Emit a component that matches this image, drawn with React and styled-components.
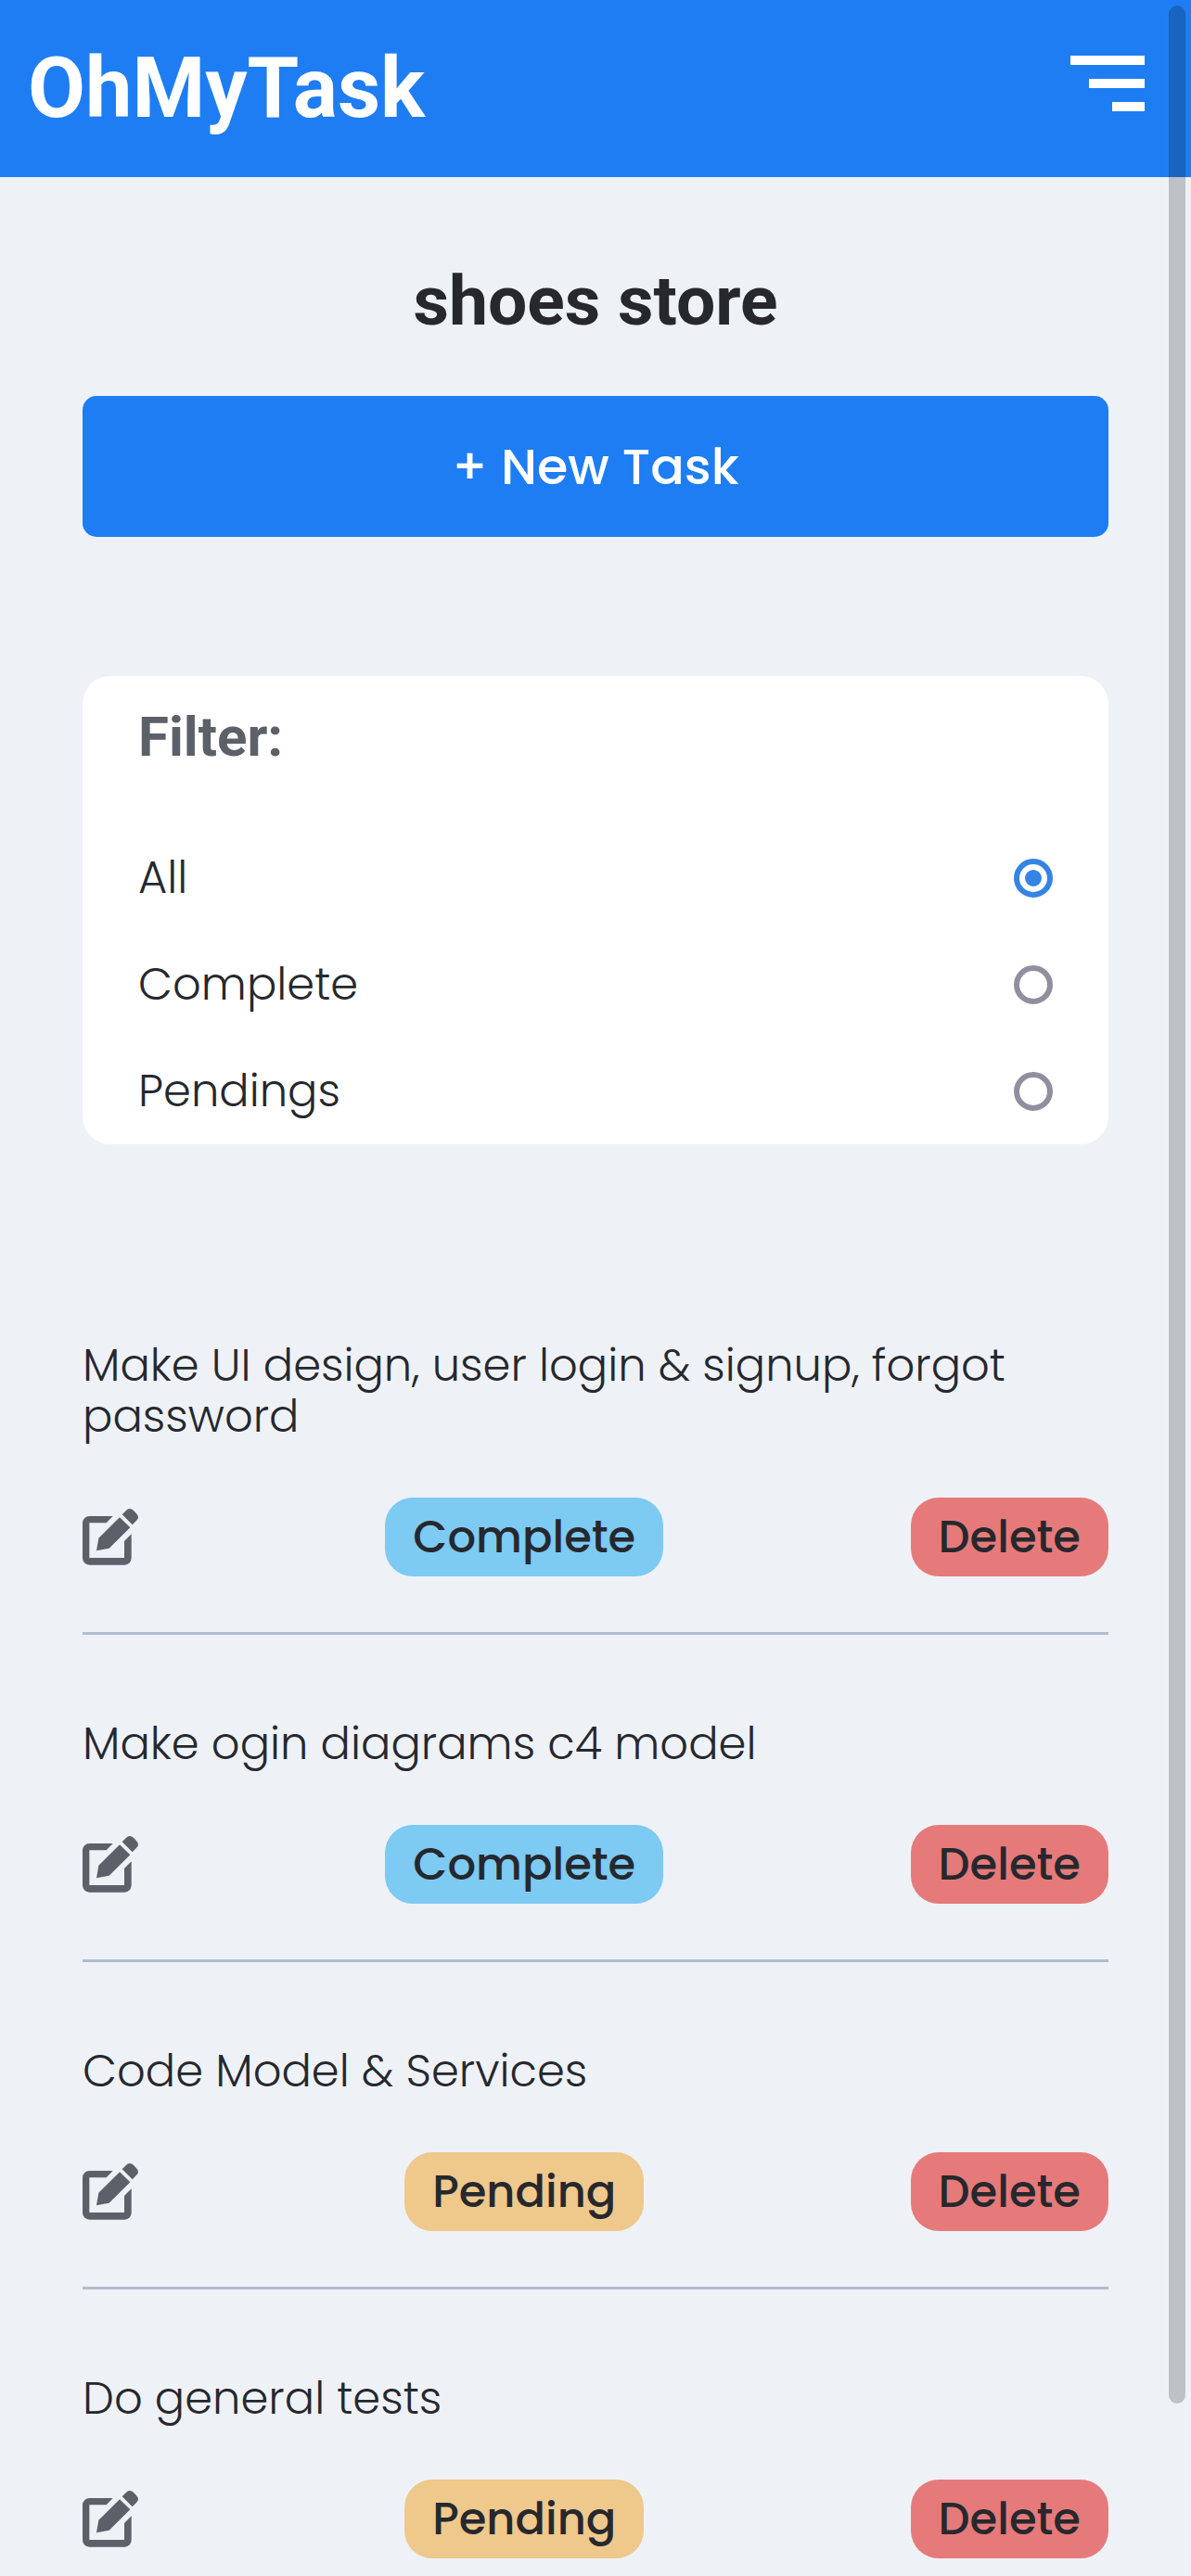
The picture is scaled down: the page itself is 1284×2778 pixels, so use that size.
import React, { useState } from "react";
import styled, { createGlobalStyle, ThemeProvider } from "styled-components";

const theme = {
  primary: "#1e7df2",
  background: "#eef2f7",
  surface: "#ffffff",
  ink: "#26282e",
  muted: "#5c6068",
  line: "#b0bccf",
  complete: "#7dcaf2",
  pending: "#efc88b",
  danger: "#e67a7a",
  heading: `Roboto, "Liberation Sans", sans-serif`,
  body: `Poppins, Inter, "Liberation Sans", sans-serif`,
};

const GlobalStyle = createGlobalStyle`
  *, *::before, *::after { box-sizing: border-box; }
  body {
    margin: 0;
    background: ${theme.background};
    color: ${theme.ink};
    font-family: ${theme.body};
  }
  h1, h2, p, ul, fieldset { margin: 0; padding: 0; }
  button { font-family: inherit; border: 0; cursor: pointer; }
`;

const Screen = styled.div`
  height: 100vh;
  overflow-y: auto;
  scrollbar-width: none;
`;

const Header = styled.header`
  display: flex;
  align-items: flex-start;
  justify-content: space-between;
  height: 191px;
  padding: 40px 50px 0 30px;
  background: ${(p) => p.theme.primary};
`;

const Logo = styled.a`
  color: #fff;
  font: 700 90px/112px ${(p) => p.theme.heading};
  text-decoration: none;
`;

const MenuButton = styled.button`
  display: flex;
  flex-direction: column;
  align-items: flex-end;
  gap: 15px;
  padding: 20px 0;
  background: none;
`;

const MenuBar = styled.span`
  width: ${(p) => p.$width}px;
  height: 10px;
  background: #fff;
`;

const Main = styled.main`
  display: flex;
  flex-direction: column;
  padding: 90px 89px 60px;
`;

const Title = styled.h1`
  font: 700 75px/86px ${(p) => p.theme.heading};
  text-align: center;
`;

const NewTaskButton = styled.button`
  height: 152px;
  margin-top: 60px;
  border-radius: 15px;
  background: ${(p) => p.theme.primary};
  color: #fff;
  font-size: 54px;
  font-weight: 500;
`;

const FilterCard = styled.fieldset`
  display: flex;
  flex-direction: column;
  margin-top: 150px;
  padding: 30px 60px;
  border: 0;
  border-radius: 30px;
  background: ${(p) => p.theme.surface};
`;

const FilterTitle = styled.h2`
  margin-bottom: 88px;
  color: ${(p) => p.theme.muted};
  font: 700 60px/72px ${(p) => p.theme.heading};
`;

const FilterOptions = styled.div`
  display: flex;
  flex-direction: column;
  gap: 60px;
`;

const FilterOption = styled.label`
  display: flex;
  align-items: center;
  justify-content: space-between;
  font-size: 48px;
  font-weight: 300;
  line-height: 55px;
`;

const Radio = styled.input`
  appearance: none;
  display: grid;
  place-items: center;
  width: 42px;
  height: 42px;
  margin: 0;
  border: 6px solid #918f9f;
  border-radius: 50%;
  background: #fff;

  &:checked {
    border-color: #3584e4;
  }

  &:checked::before {
    content: "";
    width: 18px;
    height: 18px;
    border-radius: 50%;
    background: #3584e4;
  }
`;

const TaskList = styled.ul`
  margin-top: 121px;
  list-style: none;
`;

const TaskItem = styled.li`
  display: flex;
  flex-direction: column;
  gap: 60px;
  padding: 90px 0 60px;
  border-bottom: 3px solid ${(p) => p.theme.line};
`;

const TaskName = styled.p`
  font-size: 48px;
  font-weight: 300;
  line-height: 55px;
`;

const TaskActions = styled.div`
  display: flex;
  align-items: center;
  justify-content: space-between;
`;

const EditButton = styled.button`
  display: flex;
  padding: 0;
  background: none;
  color: ${(p) => p.theme.muted};
`;

const Pill = styled.button`
  height: 85px;
  padding: 0 30px;
  border-radius: 30px;
  background: ${(p) => p.theme[p.$tone]};
  color: ${(p) => p.theme.ink};
  font-size: 48px;
  font-weight: 500;
  line-height: 55px;
`;

const ScrollThumb = styled.div`
  position: fixed;
  top: 6px;
  right: 6px;
  width: 18px;
  height: calc(100vh - 192px);
  border-radius: 9px;
  background: rgba(0, 0, 0, 0.2);
  pointer-events: none;
`;

function EditIcon() {
  return (
    <svg width="60" height="61" viewBox="0 0 180 183" fill="currentColor" aria-hidden="true">
      <path d="M98 24H22A22 22 0 0 0 0 46V160A22 22 0 0 0 22 182H136A22 22 0 0 0 158 160V82L135 105V159H22V46H77Z" />
      <path d="M120 28L154 61L86 128L45 136L52 95Z" />
      <path d="M128 19L140 7Q152 -7 166 7L173 14Q187 28 173 40L161 52Z" />
    </svg>
  );
}

const filters = ["All", "Complete", "Pendings"];

const tasks = [
  { name: "Make UI design, user login & signup, forgot password", done: true },
  { name: "Make ogin diagrams c4 model", done: true },
  { name: "Code Model & Services", done: false },
  { name: "Do general tests", done: false },
];

export default function App() {
  const [filter, setFilter] = useState("All");
  const shown = tasks.filter(
    (task) => filter === "All" || task.done === (filter === "Complete")
  );

  return (
    <ThemeProvider theme={theme}>
      <GlobalStyle />
      <Screen>
        <Header>
          <Logo href="#">OhMyTask</Logo>
          <MenuButton type="button" aria-label="Menu">
            <MenuBar $width={80} />
            <MenuBar $width={60} />
            <MenuBar $width={35} />
          </MenuButton>
        </Header>
        <Main>
          <Title>shoes store</Title>
          <NewTaskButton type="button">+ New Task</NewTaskButton>
          <FilterCard>
            <FilterTitle>Filter:</FilterTitle>
            <FilterOptions>
              {filters.map((name) => (
                <FilterOption key={name}>
                  {name}
                  <Radio
                    type="radio"
                    name="filter"
                    value={name}
                    checked={filter === name}
                    onChange={() => setFilter(name)}
                  />
                </FilterOption>
              ))}
            </FilterOptions>
          </FilterCard>
          <TaskList>
            {shown.map((task) => (
              <TaskItem key={task.name}>
                <TaskName>{task.name}</TaskName>
                <TaskActions>
                  <EditButton type="button" aria-label="Edit task">
                    <EditIcon />
                  </EditButton>
                  <Pill type="button" $tone={task.done ? "complete" : "pending"}>
                    {task.done ? "Complete" : "Pending"}
                  </Pill>
                  <Pill type="button" $tone="danger">Delete</Pill>
                </TaskActions>
              </TaskItem>
            ))}
          </TaskList>
        </Main>
      </Screen>
      <ScrollThumb />
    </ThemeProvider>
  );
}
